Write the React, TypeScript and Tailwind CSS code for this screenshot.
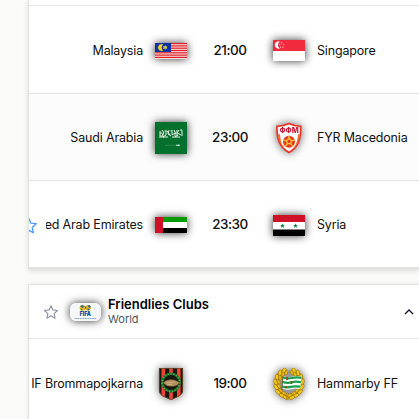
import type { ReactNode } from 'react';

const SHADOW = 'shadow-[0_0_8px_rgba(0,0,0,0.8)]';
const DROP = 'drop-shadow-[0_0_4px_rgba(0,0,0,0.6)]';

const STAR = 'M12 2.6l2.9 6.3 6.9.8-5.1 4.7 1.4 6.8-6.1-3.4-6.1 3.4 1.4-6.8-5.1-4.7 6.9-.8z';

function Star({ className }: { className: string }) {
  return (
    <svg viewBox="0 0 24 24" className={className} fill="none" stroke="currentColor" strokeWidth="1.7" strokeLinejoin="round">
      <path d={STAR} />
    </svg>
  );
}

function Malaysia() {
  return (
    <svg viewBox="0 0 32 16" className={`mt-px block h-4 w-8 ${SHADOW}`}>
      <rect width="32" height="16" fill="#f8dcdc" />
      {[0, 1, 2, 3, 4, 5, 6].map((i) => (
        <rect key={i} y={i * 2.3} width="32" height="1.2" fill="#df1e26" />
      ))}
      <rect width="16" height="9" fill="#0831a5" />
      <path d="M8 1.6A3.300 3.300 0 1 0 8 7.400A3.600 3.600 0 0 1 8 1.600Z" fill="#f4d51b" stroke="#f4d51b" strokeWidth=".4" />
      <path d="M10.2 2.1l.6 1.4 1.6-.5-.7 1.5.7 1.5-1.6-.4-.6 1.4-.6-1.4-1.6.4.7-1.5-.7-1.5 1.6.5z" fill="#e4d33b" />
    </svg>
  );
}

function Singapore() {
  return (
    <svg viewBox="0 0 32 21" className={`block h-[21px] w-8 ${SHADOW}`}>
      <rect width="32" height="21" fill="#fff" />
      <rect width="32" height="11" fill="#ef2b3d" />
      <path d="M6.8 1.4A3.8 3.8 0 1 0 6.8 8.6A4.4 4.4 0 0 1 6.8 1.4Z" fill="#fff" />
      <g fill="#ffd5d9">
        <circle cx="8.6" cy="2.8" r=".7" />
        <circle cx="6.7" cy="4.6" r=".7" />
        <circle cx="10.6" cy="4.6" r=".7" />
        <circle cx="7.5" cy="7.1" r=".7" />
        <circle cx="10" cy="7.1" r=".7" />
      </g>
    </svg>
  );
}

function SaudiArabia() {
  return (
    <svg viewBox="0 0 32 32" className={`block size-8 ${SHADOW}`}>
      <rect width="32" height="32" fill="#04702d" />
      <g fill="none" stroke="#e4f0e4" strokeWidth="1">
        <path d="M5 9v5h3v-3M7 8l2 3-2 2M11 8v5l-3 2h5M12 9l3 4M14 8l-1 4 3 2M17 8v5l3-2v3M19 8l2 4M22 8v6M24 8l-2 3 4 2M27 8v6M25 8h2M4 15h5M17 15h8M9.500 9h1M5 11h2M15.500 9h1M20 15l3-2" />
      </g>
      <path d="M10 23.300h12" stroke="#4d9460" strokeWidth=".6" />
      <path d="M21 23.300h4M23.500 22.500v1.500" stroke="#e4f2e4" strokeWidth=".9" />
    </svg>
  );
}

function Macedonia() {
  return (
    <svg viewBox="0 0 32 32" className={`block size-8 ${DROP}`}>
      <path d="M3.200 3.500Q10 3.500 16 .8Q22 3.500 28.500 3.500C29 14 27.500 25.500 16 31.400C4.500 25.500 2.700 14 3.200 3.500Z" fill="#ed3022" />
      <path d="M4.800 5Q11 4.700 16 2.400Q21 4.700 27 5C27 15 25.500 24 16 29.500C6.500 24 4.800 15 4.800 5Z" fill="#fff" />
      <path d="M5 12.200h2c.6 7 2 11.500 6 15.500C7.500 24 5.500 18 5 12.200ZM27 12.200h-2c-.6 7-2 11.500-6 15.500C24.500 24 26.500 18 27 12.200Z" fill="#f26d35" />
      <text x="16" y="11.200" textAnchor="middle" textLength="19" lengthAdjust="spacingAndGlyphs" className="font-['Inter',sans-serif] text-[7.500px] font-extrabold" fill="#c41c38">ФФМ</text>
      <circle cx="16" cy="19.800" r="6" fill="#e93822" />
      <path d="M16 13.800v3.500M10.300 18l3.500 1M21.700 18l-3.500 1M12.400 24.500l2-3M19.600 24.500l-2-3" stroke="#ffd13b" strokeWidth="1.300" />
      <path d="M13.400 18.400l2.600-1.800 2.600 1.800-1 3.300h-3.200z" fill="none" stroke="#ffd13b" strokeWidth="1.200" />
    </svg>
  );
}

function Emirates() {
  return (
    <div className={`flex h-4 w-8 ${SHADOW}`}>
      <div className="w-2 bg-[#ce1126]" />
      <div className="flex flex-1 flex-col">
        <div className="h-[5px] bg-[#019a01]" />
        <div className="flex-1 bg-white" />
        <div className="h-[5px] bg-black" />
      </div>
    </div>
  );
}

function Syria() {
  return (
    <svg viewBox="0 0 32 21" className={`block h-[21px] w-8 ${SHADOW}`}>
      <rect width="32" height="21" fill="#fff" />
      <rect width="32" height="7" fill="#ce1126" />
      <rect y="14.500" width="32" height="6.500" fill="#000" />
      <path d="M9.500 8.300l.6 1.700h1.800l-1.400 1.100.5 1.800-1.500-1.100-1.500 1.100.5-1.800L7.100 10h1.800z" fill="#00823a" />
      <path d="M22.500 8.300l.6 1.700h1.800l-1.400 1.100.5 1.800-1.500-1.100-1.500 1.100.5-1.800-1.400-1.100h1.800z" fill="#00823a" />
    </svg>
  );
}

function Brommapojkarna() {
  return (
    <svg viewBox="0 0 32 32" className={`block size-8 ${DROP}`}>
      <defs>
        <clipPath id="bp">
          <path d="M4 0H28V22C28 28 22 29 16 32C10 29 4 28 4 22Z" />
        </clipPath>
      </defs>
      <g clipPath="url(#bp)">
        <rect x="4" width="24" height="32" fill="#191311" />
        <path d="M6.500 0h3.600v32H6.500zM14.200 0h3.600v32h-3.600zM22 0h3.600v32H22z" fill="#ef4435" />
      </g>
      <path d="M4.400.4H27.600V22C27.600 27.500 22 28.700 16 31.500C10 28.700 4.400 27.500 4.400 22Z" fill="none" stroke="#64502b" strokeWidth=".8" />
      <circle cx="16" cy="14.500" r="8.200" fill="#18170f" />
      <circle cx="16" cy="14.500" r="8.800" fill="none" stroke="#176f2b" strokeWidth="2.500" />
      <circle cx="16" cy="14.500" r="8.800" fill="none" stroke="#58a849" strokeWidth="1.500" strokeDasharray="1.300 1.600" />
      <path d="M8 15l3-2.500 4.500-1 4.500.5 4.500 2.500-2.500 3-4.500 1.100-5.500-.7z" fill="#b49262" stroke="#4a351d" strokeWidth=".5" />
      <path d="M12 14.200l3 .5 4-.7M12 16.200l5 .6" fill="none" stroke="#d9bc88" strokeWidth=".7" />
    </svg>
  );
}

const LEAVES = [[11, 2.5, 30], [7, 5, 10], [4, 9, -5], [2.5, 14, -20], [3, 19, -35], [5, 24, -45], [9, 27.5, -65], [13, 29.5, -65]];

function Laurel() {
  return (
    <g>
      <path d="M13 2C5 5 2 10 3 17C4 23 8 27 19 30" fill="none" stroke="#c1930f" strokeWidth="3.500" />
      {LEAVES.map(([x, y, r], i) => (
        <g key={i} transform={`translate(${x} ${y}) rotate(${r})`}>
          <ellipse rx="1.700" ry="3" fill="#f4c51c" stroke="#80600c" strokeWidth=".45" />
          <ellipse cx="3" cy="1" rx="1.400" ry="2.500" fill="#e8b816" stroke="#80600c" strokeWidth=".4" />
        </g>
      ))}
    </g>
  );
}

function Hammarby() {
  return (
    <svg viewBox="0 0 32 32" className={`block size-8 ${DROP}`}>
      <circle cx="16" cy="16" r="11.500" fill="#999" />
      <Laurel />
      <g transform="translate(32 0) scale(-1 1)">
        <Laurel />
      </g>
      <path d="M10 8q5 2 9 .8t10-.3L27 21q-5-1-9 .2T9 20.500z" fill="#fff" />
      <path d="M10 9.500q5 1.500 9 .5t9.600-.2M9.700 14q5 1.500 9 .3t9.300 0M9.300 18.500q4 1.500 8 .4t10-.2" fill="none" stroke="#12a14b" strokeWidth="2.200" />
      <path d="M10 8l-1.200 14" stroke="#5b400c" strokeWidth=".8" />
      <path d="M14 9v3M18.500 13v3M13 18v2" stroke="#87510b" strokeWidth="1.700" />
    </svg>
  );
}

function Fifa() {
  return (
    <svg viewBox="0 0 31 18" className={`block h-[18px] w-[31px] rounded-[6px] ${SHADOW}`}>
      <rect width="31" height="18" rx="6" fill="#f5f6f8" />
      <circle cx="12.500" cy="4.800" r="2.900" fill="#e1b729" />
      <circle cx="18" cy="4.800" r="2.900" fill="#e1b729" />
      <path d="M10 3.500l2-1.500 2 1-1 2zM17.500 2.500l2-.5 1.500 2-2 1zM11 5.500l2 1.700h-2zM17 5.500l3 .5-1.500 1.500zM14.500 2.500l2 2-1 2z" fill="#326a99" />
      <text x="15.300" y="13" textAnchor="middle" textLength="11" lengthAdjust="spacingAndGlyphs" className="font-['Inter',sans-serif] text-[5.500px] font-black" fill="#134c88">FIFA</text>
      <path d="M4.500 15.500h22" stroke="#86a8c8" strokeWidth="1" strokeDasharray="1.300 .4" />
    </svg>
  );
}

interface MatchProps {
  home: ReactNode;
  away: string;
  time: string;
  homeIcon: ReactNode;
  awayIcon: ReactNode;
  className?: string;
}

function Match({ home, away, time, homeIcon, awayIcon, className = '' }: MatchProps) {
  return (
    <div className={`flex shrink-0 items-center text-[12.5px] leading-5 tracking-[-0.17px] whitespace-nowrap text-[#111] ${className}`}>
      <div className="flex w-[114px] shrink-0 items-center justify-end overflow-hidden">{home}</div>
      <div className="ml-3 w-8 shrink-0">{homeIcon}</div>
      <div className="w-[86px] shrink-0 pb-[2px] text-center text-[13.5px] font-medium tracking-[-0.5px]">{time}</div>
      <div className="w-8 shrink-0">{awayIcon}</div>
      <div className="ml-3">{away}</div>
    </div>
  );
}

export default function App() {
  return (
    <main className="flex h-[419px] w-[419px] flex-col overflow-hidden bg-[#fafaf8] pl-7 font-['Inter',sans-serif]">
      <section className="flex h-[269px] shrink-0 flex-col border-b-2 border-l border-[#e2e2e2] bg-white shadow-[0_2px_5px_rgba(0,0,0,0.12)]">
        <div className="h-[6px] shrink-0 border-b border-[#e4e4e6]" />
        <Match className="h-[88px] border-b border-[#e4e4e6] pt-[2px]" home="Malaysia" away="Singapore" time="21:00" homeIcon={<Malaysia />} awayIcon={<Singapore />} />
        <Match className="h-[87px] border-b border-[#e4e4e6] bg-[#fcfcfc] pt-[2px]" home="Saudi Arabia" away="FYR Macedonia" time="23:00" homeIcon={<SaudiArabia />} awayIcon={<Macedonia />} />
        <Match
          className="h-[86px] pt-[2px]"
          home={
            <>
              <Star className="size-[19px] shrink-0 text-[#4c9aff]" />
              <span className="ml-2 flex w-[97px] shrink-0 justify-end overflow-hidden">United Arab Emirates</span>
            </>
          }
          away="Syria"
          time="23:30"
          homeIcon={<Emirates />}
          awayIcon={<Syria />}
        />
      </section>
      <section className="mt-[15px] flex shrink-0 flex-col border-t border-l border-[#e2e2e2] bg-white shadow-[0_0_4px_rgba(0,0,0,0.08)]">
        <header className="flex h-[54px] shrink-0 items-center border-b border-[#e4e4e6] pl-[14px]">
          <Star className="size-4 text-[#8b95a5]" />
          <div className="ml-[11px]">
            <Fifa />
          </div>
          <div className="ml-[7px] flex-1">
            <h2 className="text-[13px] leading-4 font-semibold text-black">Friendlies Clubs</h2>
            <p className="text-[11px] leading-[15px] text-[#4b5563]">World</p>
          </div>
          <svg viewBox="0 0 10 6" className="mr-[5px] h-[6px] w-[10px]" fill="none" stroke="#15152f" strokeWidth="1.300">
            <path d="M1 5l4-4 4 4" />
          </svg>
        </header>
        <Match className="h-[88px] pt-px" home="IF Brommapojkarna" away="Hammarby FF" time="19:00" homeIcon={<Brommapojkarna />} awayIcon={<Hammarby />} />
      </section>
    </main>
  );
}
